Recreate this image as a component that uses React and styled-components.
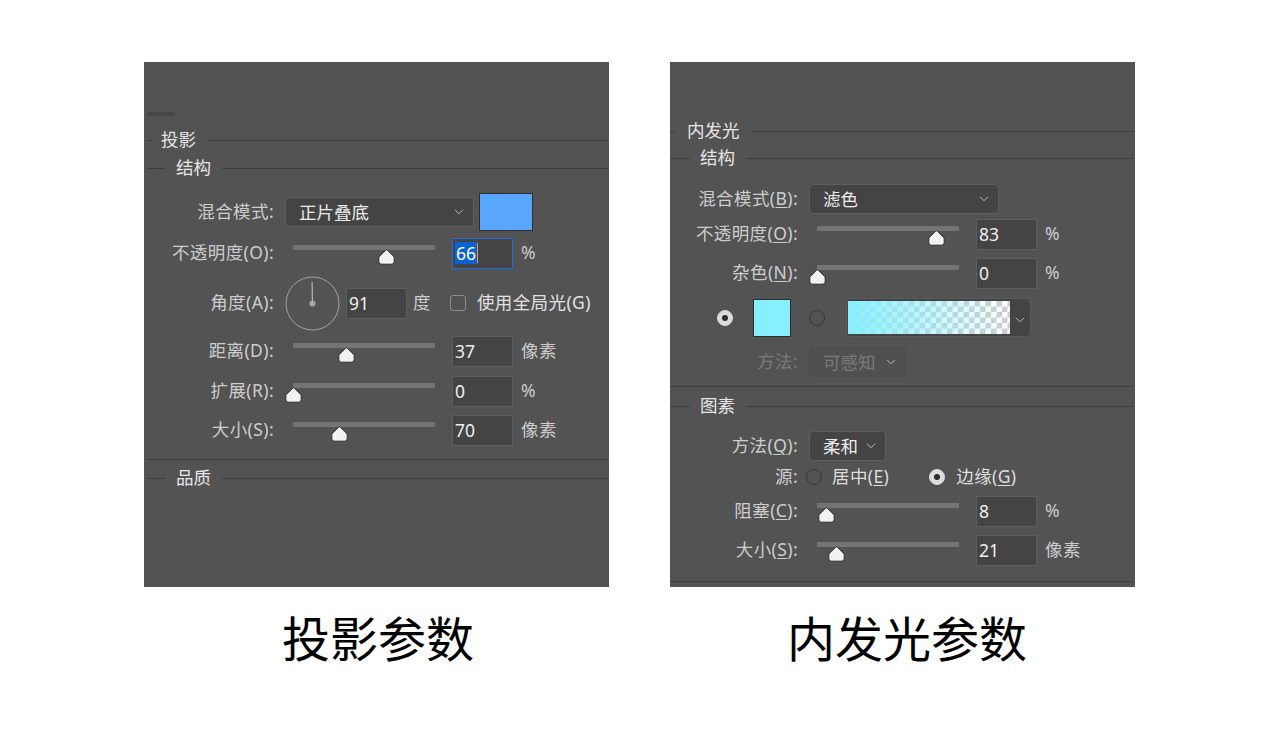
import React from 'react';
import styled, { createGlobalStyle } from 'styled-components';

const Global = createGlobalStyle`
  html, body { margin: 0; padding: 0; background: #ffffff; }
  body {
    width: 1280px; height: 733px; overflow: hidden;
    font-family: "Noto Sans", "Noto Sans CJK SC", sans-serif;
  }
`;

const Page = styled.div`
  display: flex;
  gap: 61px;
  padding: 62px 0 0 144px;
`;

const Column = styled.div`
  display: flex;
  flex-direction: column;
  align-items: center;
  width: 465px;
`;

const Panel = styled.div`
  width: 465px;
  height: 525px;
  box-sizing: border-box;
  background: #535353;
  display: flex;
  flex-direction: column;
  padding-left: ${(p) => p.$inset}px;
  padding-right: ${(p) => p.$right}px;
  color: #cdcdcd;
  font-size: 17.5px;
  letter-spacing: 0.4px;
  line-height: 22px;
`;

const Caption = styled.div`
  margin-top: 25px;
  padding-left: ${(p) => p.$shift}px;
  font-family: "Noto Sans CJK SC", sans-serif;
  font-size: 48px;
  line-height: 48px;
  color: #000;
`;

const TabMark = styled.div`
  margin-top: 50px;
  width: 28px;
  height: 4px;
  background: #474747;
`;

const Header = styled.div`
  display: flex;
  align-items: center;
  height: 20px;
  margin-top: ${(p) => p.$mt}px;
`;

const HeaderLine = styled.div`
  height: 1px;
  background: #3e3e3e;
  width: ${(p) => (p.$w ? `${p.$w}px` : 'auto')};
  flex: ${(p) => (p.$w ? 'none' : '1')};
`;

const HeaderText = styled.span`
  padding: 0 11px 0 ${(p) => p.$gap}px;
  color: #e6e6e6;
  line-height: 20px;
  letter-spacing: 0;
  white-space: nowrap;
  position: relative;
  top: -1px;
`;

const Divider = styled.div`
  height: 1px;
  background: #3e3e3e;
  margin-top: ${(p) => p.$mt}px;
`;

const Row = styled.div`
  display: flex;
  align-items: center;
  height: ${(p) => p.$h}px;
  margin-top: ${(p) => p.$mt}px;
  padding-left: ${(p) => p.$pl || 0}px;
`;

const Label = styled.div`
  width: ${(p) => p.$w}px;
  box-sizing: border-box;
  flex: none;
  padding-right: 11px;
  text-align: right;
  white-space: nowrap;
  position: relative;
  top: -1px;
  color: ${(p) => (p.$disabled ? '#7b7b7b' : '#cdcdcd')};
`;

const Key = styled.u`
  text-decoration: underline;
  text-underline-offset: 2px;
  text-decoration-thickness: 1px;
`;

const SelectBox = styled.div`
  width: ${(p) => p.$w}px;
  height: 30px;
  box-sizing: border-box;
  flex: none;
  border: 1px solid ${(p) => (p.$disabled ? '#4c4c4c' : '#5e5e5e')};
  border-radius: 4px;
  background: ${(p) => (p.$disabled ? '#505050' : '#444444')};
  display: flex;
  align-items: center;
  justify-content: space-between;
  padding: 0 9px 0 13px;
  color: ${(p) => (p.$disabled ? '#7a7a7a' : '#ececec')};
  letter-spacing: 0;
  white-space: nowrap;
`;

const Swatch = styled.div`
  width: ${(p) => p.$w}px;
  height: ${(p) => p.$h}px;
  box-sizing: border-box;
  flex: none;
  margin-left: ${(p) => p.$ml}px;
  background: ${(p) => p.$color};
  border: 1px solid #2e2e2e;
`;

const SliderBox = styled.div`
  position: relative;
  width: 158px;
  height: 30px;
  flex: none;
  align-self: flex-start;
`;

const Track = styled.div`
  position: absolute;
  left: 8px;
  right: 8px;
  top: 7px;
  height: 5px;
  background: #747474;
`;

const ThumbSvg = styled.svg`
  position: absolute;
  top: 11px;
  width: 17px;
  height: 16px;
  margin-left: -8.5px;
`;

const NumBox = styled.div`
  width: 61px;
  height: 31px;
  box-sizing: border-box;
  flex: none;
  margin-left: ${(p) => p.$ml}px;
  border: 1px solid ${(p) => (p.$focus ? '#1d6fdc' : '#5e5e5e')};
  background: #444444;
  color: #efefef;
  display: flex;
  align-items: center;
  padding-left: 2px;
  letter-spacing: 0;
`;

const Selected = styled.span`
  background: #0b63d3;
  color: #ffffff;
  padding: 0 1px;
  line-height: 22px;
`;

const Caret = styled.span`
  width: 1px;
  height: 20px;
  background: #e8913a;
`;

const Unit = styled.span`
  margin-left: ${(p) => p.$ml || 8}px;
  color: #cdcdcd;
  white-space: nowrap;
  position: relative;
  top: -1px;
`;

const CheckBox = styled.div`
  width: 16px;
  height: 16px;
  box-sizing: border-box;
  flex: none;
  margin-left: 19px;
  border: 1px solid #8e8e8e;
  border-radius: 3px;
`;

const CheckText = styled.span`
  margin-left: 11px;
  color: #e2e2e2;
  white-space: nowrap;
  position: relative;
  top: -1px;
`;

const RadioDot = styled.div`
  width: 16px;
  height: 16px;
  box-sizing: border-box;
  flex: none;
  border-radius: 50%;
  margin-left: ${(p) => p.$ml || 0}px;
  display: flex;
  align-items: center;
  justify-content: center;
  background: ${(p) => (p.$on ? '#dcdcdc' : 'transparent')};
  border: 1px solid ${(p) => (p.$on ? '#dcdcdc' : '#363636')};
  &::after {
    content: '';
    display: ${(p) => (p.$on ? 'block' : 'none')};
    width: 6px;
    height: 6px;
    border-radius: 50%;
    background: #2e2e2e;
  }
`;

const RadioText = styled.span`
  margin-left: ${(p) => p.$ml}px;
  color: #dedede;
  white-space: nowrap;
  position: relative;
  top: -1px;
`;

const GradientPicker = styled.div`
  margin-left: 21px;
  width: 185px;
  height: 39px;
  box-sizing: border-box;
  flex: none;
  display: flex;
  border: 1px solid #5c5c5c;
  border-radius: 4px;
  background: #444444;
  padding: 2px 0 2px 1px;
`;

const GradientBar = styled.div`
  width: 162px;
  height: 100%;
  flex: none;
  background-color: #ffffff;
  background-image:
    linear-gradient(to right, rgba(136, 239, 255, 1), rgba(136, 239, 255, 0)),
    linear-gradient(45deg, #cccccc 25%, transparent 25%, transparent 75%, #cccccc 75%),
    linear-gradient(45deg, #cccccc 25%, transparent 25%, transparent 75%, #cccccc 75%);
  background-size: 100% 100%, 11px 11px, 11px 11px;
  background-position: 0 0, 0 0, 5.5px 5.5px;
`;

const GradientDrop = styled.div`
  flex: 1;
  display: flex;
  align-items: center;
  justify-content: center;
  padding-top: 4px;
`;

const Chevron = () => (
  <svg width="10" height="6" viewBox="0 0 10 6">
    <polyline points="1,0.8 5,4.8 9,0.8" fill="none" stroke="#bcbcbc" strokeWidth="1" />
  </svg>
);

const Thumb = ({ pct }) => (
  <ThumbSvg viewBox="0 0 17 16" style={{ left: `${8 + pct * 142}px` }}>
    <path
      d="M7.6 1.2 Q8.5 0.4 9.4 1.2 L15.6 7.4 Q16.2 8 16.2 9 V12.6 Q16.2 15.2 13.6 15.2 H3.4 Q0.8 15.2 0.8 12.6 V9 Q0.8 8 1.4 7.4 Z"
      fill="#f1f1f1"
      stroke="#2b2b2b"
      strokeWidth="1"
    />
  </ThumbSvg>
);

const Slider = ({ pct }) => (
  <SliderBox>
    <Track />
    <Thumb pct={pct} />
  </SliderBox>
);

const Dial = () => (
  <svg width="55" height="55" viewBox="0 0 55 55" style={{ flex: 'none' }}>
    <circle cx="27.5" cy="27.5" r="26.5" fill="none" stroke="#a3a3a3" strokeWidth="1" />
    <line x1="27.5" y1="27.5" x2="27.1" y2="6" stroke="#b5b5b5" strokeWidth="1.2" />
    <circle cx="27.5" cy="27.5" r="3" fill="#a5a5a5" />
  </svg>
);

const SliderRow = ({ label, lw, pct, value, unit, mt }) => (
  <Row $h={30} $mt={mt}>
    <Label $w={lw}>{label}</Label>
    <Slider pct={pct} />
    <NumBox $ml={9}>{value}</NumBox>
    <Unit>{unit}</Unit>
  </Row>
);

const DropShadowPanel = () => (
  <Panel $inset={3} $right={0}>
    <TabMark />
    <Header $mt={14}>
      <HeaderLine $w={5} />
      <HeaderText $gap={9}>投影</HeaderText>
      <HeaderLine />
    </Header>
    <Header $mt={8}>
      <HeaderLine $w={18} />
      <HeaderText $gap={11}>结构</HeaderText>
      <HeaderLine />
    </Header>
    <Row $h={38} $mt={15}>
      <Label $w={138}>混合模式:</Label>
      <SelectBox $w={189}>
        <span>正片叠底</span>
        <Chevron />
      </SelectBox>
      <Swatch $w={54} $h={38} $ml={5} $color="#58a6ff" />
    </Row>
    <Row $h={30} $mt={7}>
      <Label $w={138}>不透明度(O):</Label>
      <Slider pct={0.66} />
      <NumBox $ml={9} $focus>
        <Selected>66</Selected>
        <Caret />
      </NumBox>
      <Unit>%</Unit>
    </Row>
    <Row $h={54} $mt={8}>
      <Label $w={138}>角度(A):</Label>
      <Dial />
      <NumBox $ml={6}>91</NumBox>
      <Unit $ml={6}>度</Unit>
      <CheckBox />
      <CheckText>使用全局光(G)</CheckText>
    </Row>
    <SliderRow mt={6} lw={138} label="距离(D):" pct={0.38} value="37" unit="像素" />
    <SliderRow mt={10} lw={138} label="扩展(R):" pct={0} value="0" unit="%" />
    <SliderRow mt={9} lw={138} label="大小(S):" pct={0.33} value="70" unit="像素" />
    <Divider $mt={14} />
    <Header $mt={8}>
      <HeaderLine $w={18} />
      <HeaderText $gap={11}>品质</HeaderText>
      <HeaderLine />
    </Header>
  </Panel>
);

const InnerGlowPanel = () => (
  <Panel $inset={0} $right={2}>
    <Header $mt={59}>
      <HeaderLine $w={5} />
      <HeaderText $gap={12}>内发光</HeaderText>
      <HeaderLine />
    </Header>
    <Header $mt={7}>
      <HeaderLine $w={20} />
      <HeaderText $gap={10}>结构</HeaderText>
      <HeaderLine />
    </Header>
    <Row $h={30} $mt={16}>
      <Label $w={139}>混合模式(<Key>B</Key>):</Label>
      <SelectBox $w={190}>
        <span>滤色</span>
        <Chevron />
      </SelectBox>
    </Row>
    <SliderRow
      mt={5}
      lw={139}
      label={<>不透明度(<Key>O</Key>):</>}
      pct={0.84}
      value="83"
      unit="%"
    />
    <SliderRow mt={9} lw={139} label={<>杂色(<Key>N</Key>):</>} pct={0} value="0" unit="%" />
    <Row $h={39} $mt={10} $pl={47}>
      <RadioDot $on />
      <Swatch $w={38} $h={38} $ml={20} $color="#88efff" />
      <RadioDot $ml={18} />
      <GradientPicker>
        <GradientBar />
        <GradientDrop>
          <Chevron />
        </GradientDrop>
      </GradientPicker>
    </Row>
    <Row $h={30} $mt={10}>
      <Label $w={139} $disabled>
        方法:
      </Label>
      <SelectBox $w={97} $disabled>
        <span>可感知</span>
        <Chevron />
      </SelectBox>
    </Row>
    <Divider $mt={9} />
    <Header $mt={9}>
      <HeaderLine $w={20} />
      <HeaderText $gap={10}>图素</HeaderText>
      <HeaderLine />
    </Header>
    <Row $h={30} $mt={15}>
      <Label $w={139}>方法(<Key>Q</Key>):</Label>
      <SelectBox $w={77}>
        <span>柔和</span>
        <Chevron />
      </SelectBox>
    </Row>
    <Row $h={24} $mt={4}>
      <Label $w={139}>源:</Label>
      <RadioDot $ml={-3} />
      <RadioText $ml={10}>居中(<Key>E</Key>)</RadioText>
      <RadioDot $ml={40} $on />
      <RadioText $ml={11}>边缘(<Key>G</Key>)</RadioText>
    </Row>
    <SliderRow mt={7} lw={139} label={<>阻塞(<Key>C</Key>):</>} pct={0.07} value="8" unit="%" />
    <SliderRow mt={9} lw={139} label={<>大小(<Key>S</Key>):</>} pct={0.14} value="21" unit="像素" />
    <Divider $mt={16} />
  </Panel>
);

export default function App() {
  return (
    <>
      <Global />
      <Page>
        <Column>
          <DropShadowPanel />
          <Caption $shift={3}>投影参数</Caption>
        </Column>
        <Column>
          <InnerGlowPanel />
          <Caption $shift={9}>内发光参数</Caption>
        </Column>
      </Page>
    </>
  );
}
